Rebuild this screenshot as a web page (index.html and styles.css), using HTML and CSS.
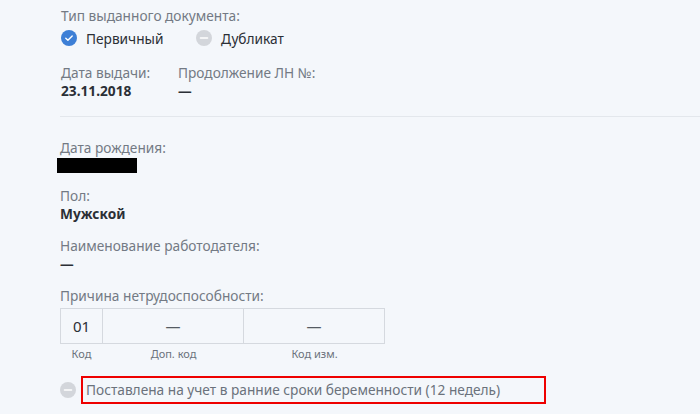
FILE: index.html
```html
<!DOCTYPE html>
<html lang="ru">
<head>
<meta charset="utf-8">
<link rel="stylesheet" href="styles.css">
</head>
<body>
<div class="page">
  <section class="top">
    <div class="field">
      <div class="label">Тип выданного документа:</div>
      <div class="radios">
        <div class="radio">
          <svg class="ic" viewBox="0 0 16 16"><circle cx="8" cy="8" r="8" fill="#3d7fd6"/><path d="M4.8 8.3l2.1 2 4.3-4.3" fill="none" stroke="#fff" stroke-width="1.4" stroke-linecap="round" stroke-linejoin="round"/></svg>
          <span class="rtext">Первичный</span>
        </div>
        <div class="radio">
          <svg class="ic" viewBox="0 0 16 16"><circle cx="8" cy="8" r="8" fill="#d3d6db"/><path d="M4.5 8h7" stroke="#fff" stroke-width="1.6" stroke-linecap="round"/></svg>
          <span class="rtext">Дубликат</span>
        </div>
      </div>
    </div>
    <div class="pair">
      <div class="field first">
        <div class="label">Дата выдачи:</div>
        <div class="value">23.11.2018</div>
      </div>
      <div class="field">
        <div class="label">Продолжение ЛН №:</div>
        <div class="value">—</div>
      </div>
    </div>
  </section>
  <section class="bottom">
    <div class="field">
      <div class="label">Дата рождения:</div>
      <div class="redacted"></div>
    </div>
    <div class="field">
      <div class="label">Пол:</div>
      <div class="value">Мужской</div>
    </div>
    <div class="field">
      <div class="label">Наименование работодателя:</div>
      <div class="value">—</div>
    </div>
    <div class="field">
      <div class="label">Причина нетрудоспособности:</div>
      <div class="codes">
        <div class="cell c1">01</div>
        <div class="cell c2">—</div>
        <div class="cell c3">—</div>
        <div class="cap c1">Код</div>
        <div class="cap c2">Доп. код</div>
        <div class="cap c3">Код изм.</div>
      </div>
    </div>
    <div class="flag">
      <svg class="ic" viewBox="0 0 16 16"><circle cx="8" cy="8" r="8" fill="#d3d6db"/><path d="M4.5 8h7" stroke="#fff" stroke-width="1.6" stroke-linecap="round"/></svg>
      <span class="flagtext">Поставлена на учет в ранние сроки беременности (12 недель)</span>
    </div>
  </section>
</div>
</body>
</html>
```
FILE: styles.css
```css
html, body {
  margin: 0;
  padding: 0;
  background: #f4f7fb;
}
body {
  font-family: "Noto Sans", "Open Sans", sans-serif;
  font-size: 13.7px;
  color: #2b2f36;
  width: 700px;
  height: 414px;
  overflow: hidden;
}
.page {
  padding-left: 60px;
}
.top {
  padding: 7px 0 16px 1px;
  border-bottom: 1px solid #e3e7ec;
}
.label {
  color: #737a84;
  line-height: 18px;
}
.value {
  font-weight: 700;
  line-height: 18px;
  color: #2b2f36;
}
.radios {
  display: flex;
  margin-top: 3px;
  height: 20px;
  align-items: center;
}
.radio {
  display: flex;
  align-items: center;
  width: 135px;
}
.ic {
  width: 16px;
  height: 16px;
  flex: none;
}
.rtext {
  margin-left: 9px;
  color: #2b2f36;
}
.pair {
  display: flex;
  margin-top: 16px;
}
.pair .first {
  width: 117px;
}
.bottom {
  padding-top: 22px;
}
.bottom .field {
  margin-bottom: 14px;
}
.redacted {
  width: 80px;
  height: 15px;
  background: #000;
  margin: 1px 0 4px -3px;
}
.codes {
  display: grid;
  grid-template-columns: 43px 141px 141px;
  margin-top: 3px;
}
.cell {
  height: 34px;
  display: flex;
  align-items: center;
  justify-content: center;
  border: 1px solid #d5d9df;
  border-left: none;
  font-size: 15px;
  color: #2b2f36;
}
.cell.c1 {
  border-left: 1px solid #d5d9df;
}
.cell.c2, .cell.c3 {
  color: #555b63;
}
.cap {
  text-align: center;
  font-size: 11px;
  color: #6b727c;
  line-height: 16px;
  margin-top: 2px;
}
.flag {
  display: flex;
  align-items: center;
  margin-top: 10px;
}
.flag .ic {
  margin-right: 5px;
}
.flagtext {
  border: 2px solid #ee0000;
  padding: 2px 44px 3px 3px;
  color: #6b727c;
  line-height: 19px;
}
```
